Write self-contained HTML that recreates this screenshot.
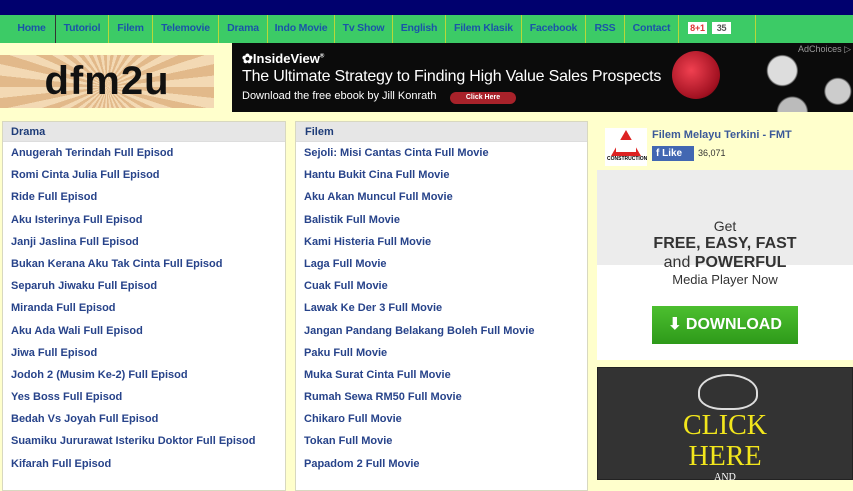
<!DOCTYPE html>
<html><head><meta charset="utf-8"><style>
*{margin:0;padding:0;box-sizing:border-box}
body{width:853px;height:480px;overflow:hidden;background:#ffffcc;font-family:"Liberation Sans",Arial,sans-serif;position:relative}
.top{position:absolute;left:0;top:0;width:853px;height:15px;background:#00006e}
.nav{position:absolute;left:0;top:15px;width:853px;height:28px;background:#3ccb66}
.nav a{position:absolute;top:0;height:28px;line-height:26px;font-size:10.5px;font-weight:bold;color:#1a55a8;text-align:center;border-right:1px solid #b8d838;letter-spacing:-0.2px}
.logo{position:absolute;left:0;top:55px;width:214px;height:53px;background:repeating-conic-gradient(from 0deg at 50% 60%,#f3d9b4 0 6deg,#e2b98a 6deg 12deg);font:bold 40px "Liberation Sans",sans-serif;color:#111;text-align:center;line-height:53px;letter-spacing:1px}
.ad{position:absolute;left:232px;top:43px;width:621px;height:69px;background:#0b0b0b;color:#fff}
.panel{position:absolute;top:121px;background:#fff;border:1px solid #d8d8c0;height:370px}
.panel .h{height:20px;background:#e6e6e6;font-size:11px;font-weight:bold;color:#1e3c78;padding-left:8px;line-height:20px;border-bottom:1px solid #ddd}
.panel div.i{height:22.2px;line-height:23px;font-size:11px;font-weight:bold;color:#27438a;padding-left:8px}
</style></head><body>
<div class="top"></div>
<div class="nav">
<a style="left:8px;width:48px;border-right-color:#333">Home</a>
<a style="left:56px;width:53px">Tutoriol</a>
<a style="left:109px;width:44px">Filem</a>
<a style="left:153px;width:66px">Telemovie</a>
<a style="left:219px;width:49px">Drama</a>
<a style="left:268px;width:67px">Indo Movie</a>
<a style="left:335px;width:58px">Tv Show</a>
<a style="left:393px;width:53px">English</a>
<a style="left:446px;width:76px">Filem Klasik</a>
<a style="left:522px;width:64px">Facebook</a>
<a style="left:586px;width:39px">RSS</a>
<a style="left:625px;width:54px">Contact</a>
<a style="left:679px;width:77px"><span style="position:absolute;left:9px;top:7px;width:19px;height:12px;background:#fff;color:#d33;font-size:9px;line-height:12px">8+1</span><span style="position:absolute;left:33px;top:7px;width:19px;height:12px;background:#fff;color:#555;font-size:9px;line-height:12px">35</span></a>
</div>
<div class="logo">dfm2u</div>
<div class="ad">
<div style="position:absolute;left:10px;top:8px;font-size:13px;font-weight:bold">✿InsideView<sup style="font-size:6px">®</sup></div>
<div style="position:absolute;left:10px;top:25px;font-size:16px;white-space:nowrap;letter-spacing:-0.2px">The Ultimate Strategy to Finding High Value Sales Prospects</div>
<div style="position:absolute;left:10px;top:47px;font-size:11px;white-space:nowrap">Download the free ebook by Jill Konrath</div>
<div style="position:absolute;left:218px;top:49px;width:66px;height:12px;border-radius:6px;background:#a8222a;font-size:7px;font-weight:bold;text-align:center;line-height:12px">Click Here</div>
<div style="position:absolute;left:440px;top:8px;width:48px;height:48px;border-radius:50%;background:radial-gradient(circle at 40% 40%,#f04050,#a01020 70%,#300)"></div>
<div style="position:absolute;left:520px;top:0;width:101px;height:69px;background:radial-gradient(circle at 30% 40%,#ddd 0 14px,transparent 16px),radial-gradient(circle at 85% 70%,#ccc 0 12px,transparent 14px),radial-gradient(circle at 40% 100%,#bbb 0 14px,transparent 16px)"></div>
<div style="position:absolute;right:2px;top:1px;font-size:9px;color:#999">AdChoices ▷</div>
</div>
<div class="panel" style="left:2px;width:284px">
<div class="h">Drama</div>
<div class="i">Anugerah Terindah Full Episod</div><div class="i">Romi Cinta Julia Full Episod</div><div class="i">Ride Full Episod</div><div class="i">Aku Isterinya Full Episod</div><div class="i">Janji Jaslina Full Episod</div><div class="i">Bukan Kerana Aku Tak Cinta Full Episod</div><div class="i">Separuh Jiwaku Full Episod</div><div class="i">Miranda Full Episod</div><div class="i">Aku Ada Wali Full Episod</div><div class="i">Jiwa Full Episod</div><div class="i">Jodoh 2 (Musim Ke-2) Full Episod</div><div class="i">Yes Boss Full Episod</div><div class="i">Bedah Vs Joyah Full Episod</div><div class="i">Suamiku Jururawat Isteriku Doktor Full Episod</div><div class="i">Kifarah Full Episod</div>
</div>
<div class="panel" style="left:295px;width:293px">
<div class="h" style="padding-left:9px">Filem</div>
<div class="i">Sejoli: Misi Cantas Cinta Full Movie</div><div class="i">Hantu Bukit Cina Full Movie</div><div class="i">Aku Akan Muncul Full Movie</div><div class="i">Balistik Full Movie</div><div class="i">Kami Histeria Full Movie</div><div class="i">Laga Full Movie</div><div class="i">Cuak Full Movie</div><div class="i">Lawak Ke Der 3 Full Movie</div><div class="i">Jangan Pandang Belakang Boleh Full Movie</div><div class="i">Paku Full Movie</div><div class="i">Muka Surat Cinta Full Movie</div><div class="i">Rumah Sewa RM50 Full Movie</div><div class="i">Chikaro Full Movie</div><div class="i">Tokan Full Movie</div><div class="i">Papadom 2 Full Movie</div>
</div>
<div style="position:absolute;left:605px;top:128px;width:42px;height:38px;background:#fff">
<div style="position:absolute;left:6px;top:2px;width:0;height:0;border-left:15px solid transparent;border-right:15px solid transparent;border-bottom:26px solid #d22"></div>
<div style="position:absolute;left:11px;top:12px;width:20px;height:12px;background:#fff"></div>
<div style="position:absolute;left:2px;top:28px;font-size:5px;font-weight:bold">CONSTRUCTION</div></div>
<div style="position:absolute;left:652px;top:129px;font-size:11px;font-weight:bold;color:#3b5998">Filem Melayu Terkini - FMT</div>
<div style="position:absolute;left:652px;top:146px;width:42px;height:15px;background:#4267b2;color:#fff;font-size:10px;font-weight:bold;line-height:15px;padding-left:4px">f Like</div>
<div style="position:absolute;left:698px;top:148px;font-size:9px;color:#333">36,071</div>
<div style="position:absolute;left:597px;top:170px;width:256px;height:190px;background:linear-gradient(#ececec 0,#ececec 95px,#fff 95px);text-align:center;color:#333">
<div style="position:absolute;top:48px;width:256px;font-size:14px">Get</div>
<div style="position:absolute;top:65px;width:256px;font-size:16px;font-weight:bold">FREE, EASY, FAST</div>
<div style="position:absolute;top:84px;width:256px;font-size:16px">and <b>POWERFUL</b></div>
<div style="position:absolute;top:102px;width:256px;font-size:13px">Media Player Now</div>
<div style="position:absolute;left:55px;top:136px;width:146px;height:38px;background:linear-gradient(#4cbf2f,#2e9a1a);color:#fff;font-size:16px;font-weight:bold;line-height:38px">⬇ DOWNLOAD</div>
</div>
<div style="position:absolute;left:597px;top:367px;width:256px;height:113px;background:#333;text-align:center;border:1px solid #222">
<div style="position:absolute;left:100px;top:6px;width:60px;height:36px;border:2px solid #ddd;border-radius:50% 50% 40% 40%"></div>
<div style="position:absolute;top:42px;width:254px;font:28px 'Liberation Serif',serif;color:#f2e61c;line-height:31px">CLICK<br>HERE</div>
<div style="position:absolute;top:104px;width:254px;font:10px 'Liberation Serif',serif;color:#fff">AND</div>
</div>
</body></html>
